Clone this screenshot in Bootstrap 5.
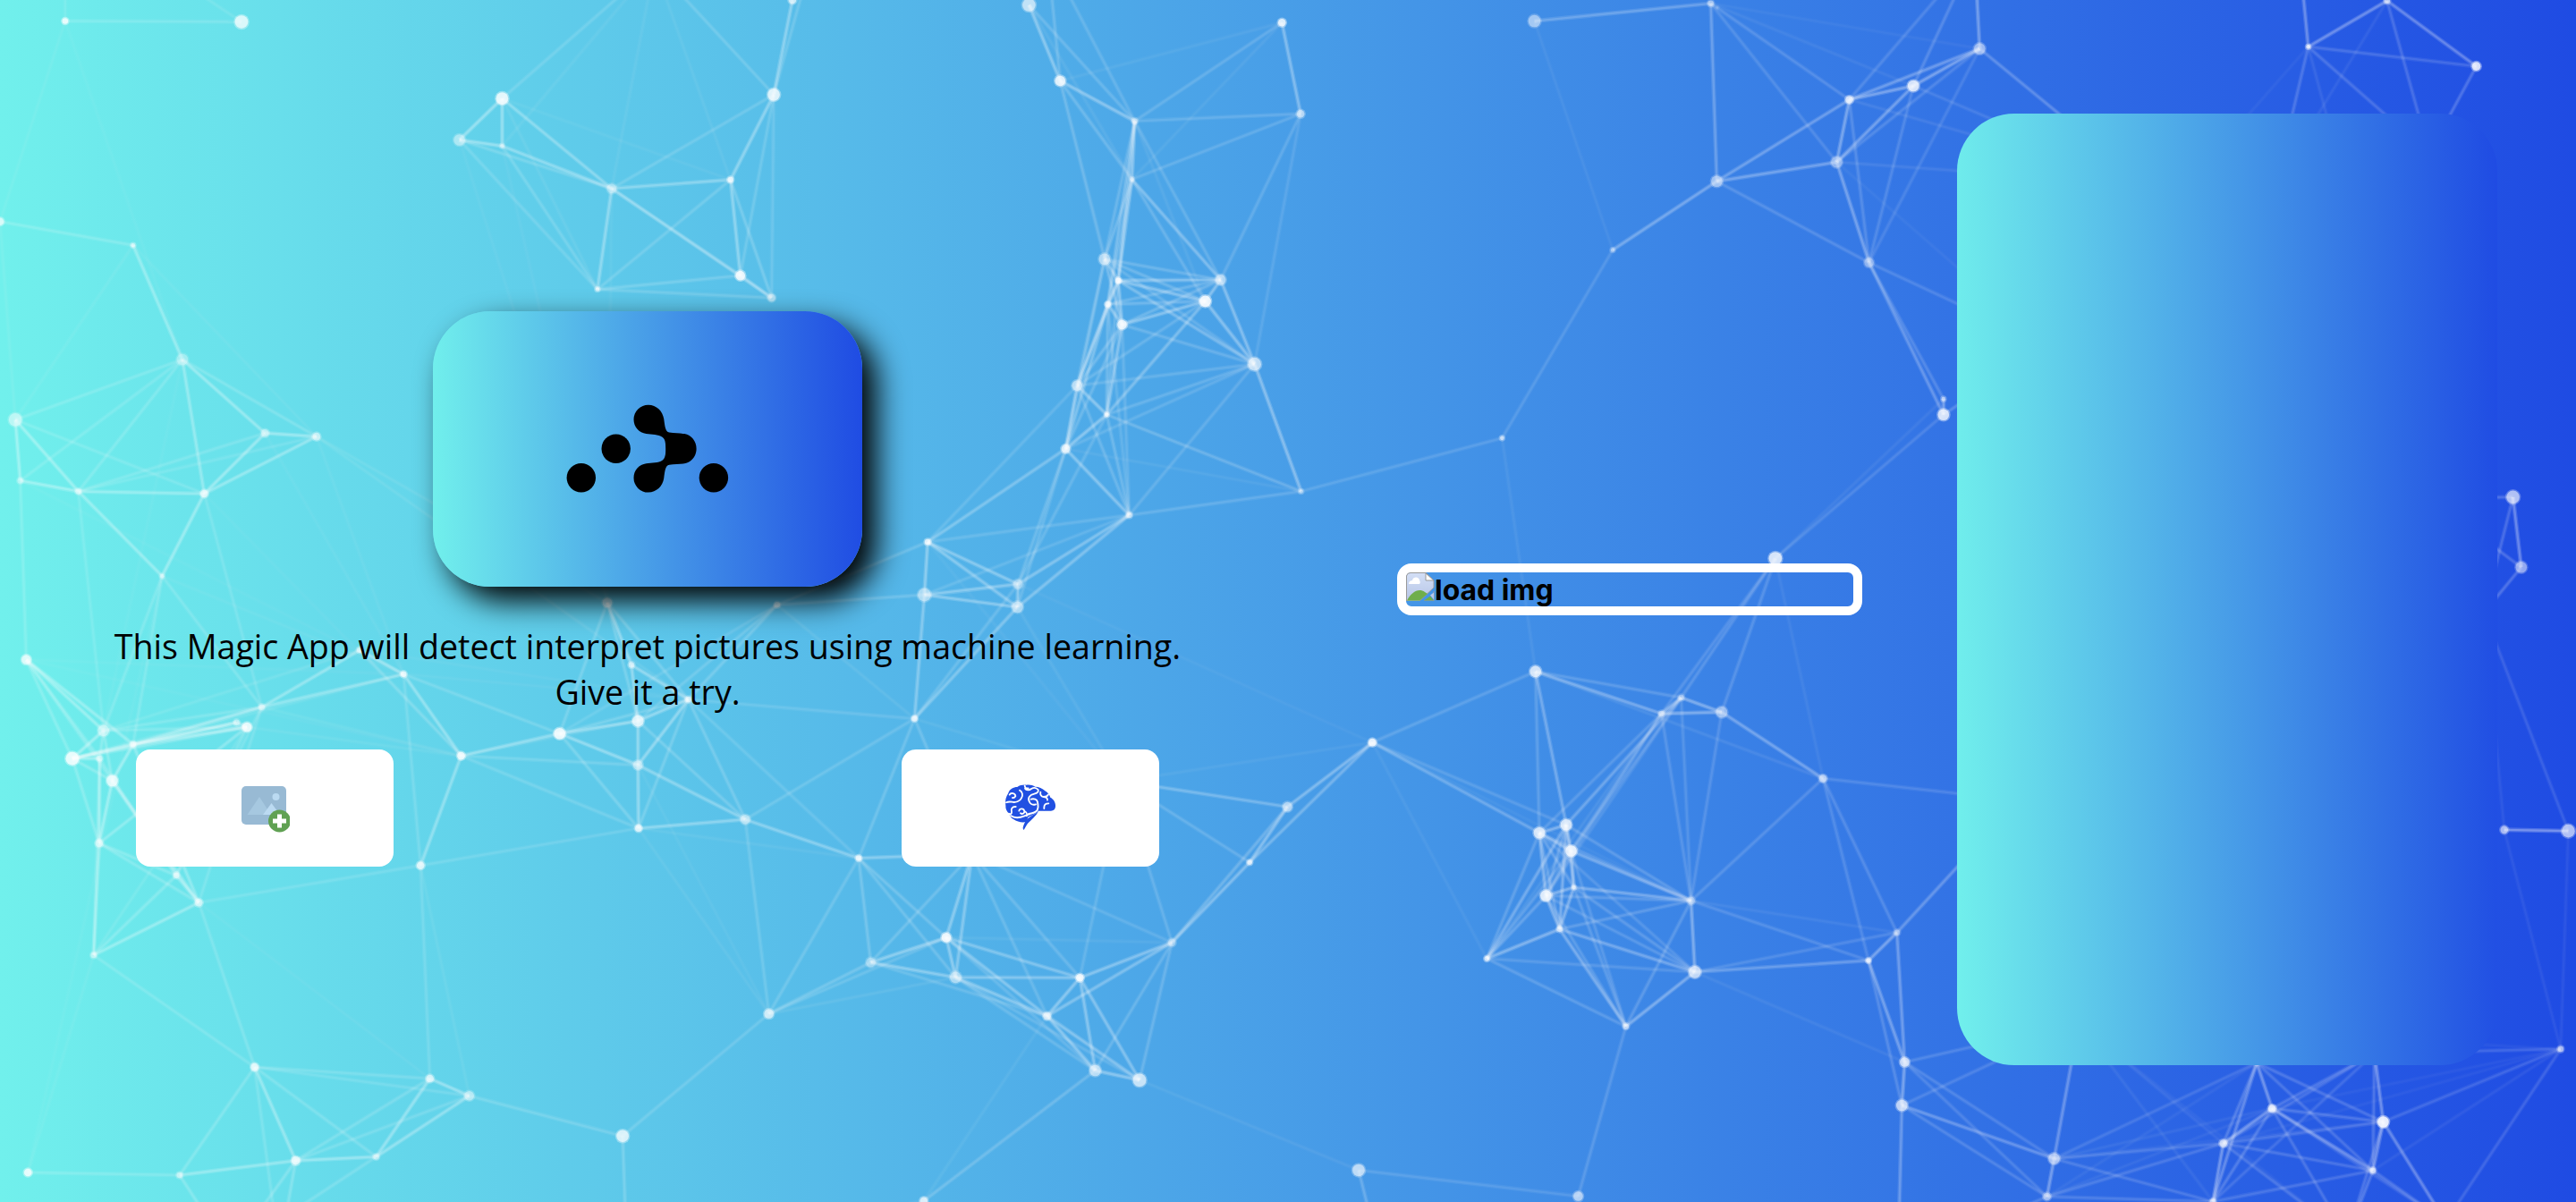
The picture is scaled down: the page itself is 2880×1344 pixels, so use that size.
<!DOCTYPE html>
<html lang="en">
<head>
<meta charset="utf-8">
<meta name="viewport" content="width=device-width, initial-scale=1">
<title>Magic App</title>
<link rel="stylesheet" href="https://cdn.jsdelivr.net/npm/bootstrap@5.3.0/dist/css/bootstrap.min.css">
<style>
  :root { --grad: #71f0ec, #1f4be3; }
  body { background: linear-gradient(90deg, var(--grad)); color: #000; min-height: 1344px; }
  .net-canvas { inset: 0; width: 2880px; height: 1344px; z-index: 0; }
  .stage { height: 1317px; z-index: 1; }
  .intro { width: 1448px; }
  .logo-tile { width: 480px; height: 308px; border-radius: 64px; background: linear-gradient(89deg, var(--grad)); box-shadow: 16px 16px 34px #000; }
  .tagline { font: 400 37.6px/51px "Open Sans", "Noto Sans", sans-serif; margin-top: 41px; margin-bottom: 39px; }
  .action-row { width: 1144px; margin-right: 1px; }
  .action-btn, .action-btn:hover { width: 288px; height: 131px; border-radius: 16px; background: #fff; border: 0; padding: 0; }
  .preview { width: 520px; height: 58px; margin-left: 114px; border: 10px solid #fff; border-radius: 16px; font: 700 31.9px/39px Inter, sans-serif; }
  .result { width: 604px; height: 1064px; margin-left: 106px; border-radius: 64px; background: linear-gradient(89deg, var(--grad)); }
</style>
</head>
<body class="position-relative overflow-hidden">
<svg class="net-canvas position-absolute" id="net" viewBox="0 0 2880 1344" aria-hidden="true"></svg>

<main class="stage d-flex align-items-center position-relative">
  <section class="intro d-flex flex-column align-items-center flex-shrink-0">
    <div class="logo-tile d-flex align-items-center justify-content-center">
      <svg width="184" height="100" viewBox="632 452 184 100">
        <circle cx="649.8" cy="534.3" r="16.2"/><circle cx="688.7" cy="501.7" r="16.2"/><circle cx="797.9" cy="534.3" r="16.2"/>
        <path d="M724.9 452.8c9 0 16 7 17.300 15.500c1.300 9 1.500 14.200 6 15.300c6 1.200 12 .7 17 1.500c8 1.500 13.400 8.500 13.400 16.600s-5.400 15.100-13.400 16.600c-5 .8-11 .3-17 1.500c-4.500 1.100-4.700 6.300-6 15.300c-1.300 8.500-8.300 15.500-17.300 15.500a16.200 16.200 0 0 1-16.400-16.300c0-8.500 6-14.800 14-16c6-.9 14-.7 18-3.600c3.200-2.500 3.700-6 3.700-13s-.5-10.500-3.700-13c-4-2.900-12-2.700-18-3.600c-8-1.200-14-7.500-14-16a16.200 16.200 0 0 1 16.400-16.300z"/>
      </svg>
    </div>
    <p class="tagline text-center">This Magic App will detect interpret pictures using machine learning.<br>Give it a try.</p>
    <div class="action-row d-flex justify-content-between">
      <button class="action-btn btn d-flex align-items-center justify-content-center" aria-label="Add picture">
        <svg width="56" height="54" viewBox="0 0 56 54">
          <rect x="2" y="2" width="50" height="43" rx="5" fill="#98bad4"/>
          <path d="M8.500 34l13.500-20 13 20z" fill="#a6c8e0"/><path d="M26 34l9.500-13 9.500 13z" fill="#bbdaf1"/>
          <circle cx="40.500" cy="14" r="4" fill="#bbdaf1"/>
          <circle cx="44.500" cy="41" r="12.500" fill="#60a153"/>
          <path d="M42 33.500h5v5h5v5h-5v5h-5v-5h-5v-5h5z" fill="#fff"/>
        </svg>
      </button>
      <button class="action-btn btn d-flex align-items-center justify-content-center" aria-label="Detect">
        <svg width="60" height="56" viewBox="66 44 180 168">
          <path fill="#2150e2" d="M73 118c-3-16 1-30 9-42 4-13 17-20 30-20 8-6 20-8 30-7 10-2 22 0 30 6 12 0 25 6 33 14 10 5 16 15 18 22 12 6 19 19 17 32-2 9-6 13-15 13h-42c-4 6-10 8-17 12-12 7-15 5-18 10l-5 14c-12 5-30 1-44-8-9-5-13-13-14-19-8-7-13-16-12-27z"/>
          <path fill="#2150e2" d="M183 138c-9 16-22 27-36 40-4 6-8 13-13 22-3-2-4-7-2-12 4-11 8-20 15-26 10-8 24-15 36-24z"/>
          <g fill="none" stroke="#fff" stroke-width="5.500" stroke-linecap="round">
            <path d="M86 82c4-8 20-6 20 5M106 87c-3 5-6 6-10 5M120 67c9 4 12 17 6 26-5 11-20 16-32 13-8-1-14-1-19 2"/>
            <path d="M137 51c0 7 5 11 12 9M138 61c4 6 14 7 21 1 8-5 17-4 23 3 2 7-3 12-13 14-15 3-23 14-17 25 4 9 13 13 22 10M158 97c9-3 21 0 22 10 3 11 2 20-1 27-8 8-18 11-29 12"/>
            <path d="M190 73c-2 8 2 15 10 16 8 0 13-2 16-8M200 89c8 0 14 4 13 11M202 124c0-9 6-13 15-13M202 124v4"/>
            <path d="M107 122c-12-1-17 7-14 17 1 7-4 10-9 6M118 136c2-9 16-9 18 1 1 8-8 11-13 7M136 137c6 3 10 10 8 16M90 152c14 10 32 7 46 1 8-4 12-4 18-6"/>
          </g>
        </svg>
      </button>
    </div>
  </section>

  <section class="preview d-flex align-items-start flex-shrink-0">
    <svg width="32" height="32" viewBox="0 0 32 32" class="flex-shrink-0">
      <defs><linearGradient id="sky" x2="0" y2="1"><stop stop-color="#d3dff6"/><stop offset="1" stop-color="#b6c5e6"/></linearGradient></defs>
      <path d="M.500 4Q1 .500 5 .500H22L31 9V17L15 32H.500z" fill="url(#sky)" stroke="#999" stroke-width="1"/>
      <path d="M3 13c0-3 2-4 4-4 1-5 8-4 8 0 1 1 1 3 0 4z" fill="#fff"/>
      <path d="M1 31.500C6 22 14 17 21 22L24 24 15 31.500z" fill="#6fae4b"/>
      <path d="M20 31.500l7-5 4 5z" fill="#6fae4b"/>
      <path d="M31 21v11H20" fill="none" stroke="#999"/>
      <path d="M27 25.500l4-3v8z" fill="#b9c7e6"/>
      <path d="M22 1v8h9z" fill="#fff" stroke="#999"/>
    </svg>
    <span>load img</span>
  </section>

  <section class="result flex-shrink-0"></section>
</main>

<script src="https://cdn.jsdelivr.net/npm/bootstrap@5.3.0/dist/js/bootstrap.bundle.min.js"></script>
<script>
// Constellation: six tiles of 960x672, each holding nodes "x,y,radius,opacity" on a 1568-unit grid.
const tiles = {
  a: [0, 0, '119,55,4,.9 441,57,8,.8 0,578,5,.7 243,640,3,.7 333,938,7,.35 28,1095,8,.5 37,1254,4,.4 143,1282,4,.5 373,1288,5,.7 484,1130,5,.5 578,1139,5,.6 296,1503,3,.5 917,257,7.5,.9 839,365,7,.45 917,381,3,.5 1117,492,6,.4 1334,469,4,.8 1413,247,7.5,.85 1447,0,5,.7 1091,755,3,.7 1352,719,6,.95 1409,777,5,.5 1195,-90,3,.3 1500,-200,3,.3 360,-20,3,.3 119,-80,3,.3'],
  b: [960, 0, '311,13,8,.65 368,211,6.5,.9 504,316,4,.5 773,59,5,.9 807,297,5,.6 499,468,3,.5 449,676,7,.55 474,732,4,.9 455,794,4,.8 481,847,6,.9 633,786,7,1 661,730,6.5,.55 723,950,8,.65 399,1006,6.500,.6 453,1082,3,.8 378,1171,5.500,.8 494,1344,4,.6 808,1282,3,.5 126,1414,4,.85 120,1552,8,.5 291,1524,6,.4 1234,55,7.500,.5 1556,9,4,.5 1377,652,3,.5 1175,1143,3,.7 1567,473,7,.5 345,-120,3,.3 1700,-160,3,.3'],
  c: [0, 672, '48,153,6,.8 189,338,7,.5 132,411,8,.9 243,374,4,.6 182,411,4,.5 205,469,7,.8 181,632,5,.6 432,317,4,.5 451,329,6,.9 478,277,4,.5 657,128,4,.6 737,191,4,.8 842,404,5,.9 1022,346,7,.95 1165,313,7,.8 1165,428,6,.5 1166,593,4.500,.8 1361,570,6,.5 1257,257,4,.6 1153,167,4,.6 1109,4,6,.5 1419,10,4,.5 768,690,5,.8 322,716,4,.6 363,787,5,.6 171,924,4,.5 465,1216,5,.8 785,1246,5,.7 857,1291,6,.5 1137,1396,7.500,.8 1404,1077,6,.7 51,1491,5,.9 328,1498,4,.5 540,1460,5.500,.8 687,1450,4,.5 420,1700,3,.3 510,1700,3,.3 1145,1720,3,.3'],
  d: [960, 672, '290,16,7,.5 102,307,4,.8 0,671,4,.8 22,943,6,.4 160,878,6,.95 177,982,7,.5 344,1083,5,.7 404,983,5,.95 572,891,5,.4 432,1225,7,.6 513,1250,8,.7 714,682,3.500,.8 783,537,6,.55 938,369,5,.95 1236,184,7,.8 1466,294,4,.5 1502,252,4,.4 1243,605,7,.8 1292,584,7,.8 1301,652,7,.9 1306,747,3,.6 1255,769,7,.9 1280,856,4,.6 1147,933,3.500,.8 1520,782,5,.4 1527,968,7.500,.7 1401,1110,4,.6 1314,1553,6,.6 913,1485,7.500,.65 119,1565,5,.8 207,660,3,.3 480,470,3,.3 940,1640,3,.3'],
  e: [1920, 0, '0,20,2,.2 241,260,5,.8 358,224,7,.85 479,127,7,.5 218,423,7,.4 277,685,6,.4 413,1041,3,.6 413,1082,7,.85 106,1457,8,.85 1079,122,3,.8 1223,2,4,.6 1386,173,5.500,.9 1453,1297,8,.65 1468,1480,7,.5 780,480,3,.3 470,-120,3,.3 1060,-160,3,.3 1300,400,3,.3 1020,480,3,.3 600,900,3,.3 1300,1300,3,.3'],
  f: [1920, 672, '8,290,7,.45 193,463,5,.6 328,865,4,.4 276,938,3.500,.8 342,1203,6,.75 337,1316,7,.7 615,1455,7,.55 602,1554,5,.5 924,1415,5,.7 1013,1324,5,.85 1216,1359,7,1 1197,1486,4,.7 905,1567,4,.6 1437,597,5,.6 1554,600,8,.65 1540,1169,4,.6 985,1205,3,.3 1200,1180,3,.3 550,520,3,.3 660,1100,3,.3 1400,30,3,.3 330,1720,3,.3 1330,1620,3,.3 1150,1660,3,.3']
};
// Links by strength.
const links = {
  '.34': 'a12-a13 a12-a14 a13-a14 a12-a15 a14-a15 a15-a16 a15-a20 a16-a17 a17-a18 a16-a20 a15-a19 a20-a21 a3-a4 a4-a9 a9-a10 a9-a8 a8-a10 a7-a8 a6-a7 a5-a7 a5-a6 a7-a11 a8-a11 a4-a8 ' +
    'b0-b1 b1-b2 b3-b4 b2-b5 b5-b7 b2-b7 b6-b7 b7-b11 b7-b10 b7-b8 b8-b9 b10-b11 b9-b10 b10-b12 b11-b12 b12-b17 b8-b13 b7-b9 b13-b14 b14-b15 b13-b15 b8-b15 b9-b14 b10-b14 b15-b16 b15-b18 b18-b19 b18-b20 b16-b20 b20-d0 b19-d0 b19-b20 b19-d1 d0-d1 b7-b12 b23-b25 b21-b22 b22-b25 b2-b8 b18-d0 b16-d0 b5-b11 ' +
    'c0-c1 c0-c3 c2-c3 c1-c2 c3-c9 c2-c8 c3-c8 c3-c7 c2-c7 c2-c4 c4-c6 c5-c6 c3-c5 c5-c24 c3-c24 c7-c8 c9-c10 c9-c11 c10-c11 c11-c12 c12-c13 c13-c14 c14-c15 c15-c16 c13-c15 c14-c18 c14-c19 c19-c20 c18-c19 c15-c18 c16-c17 c17-d2 c15-c17 c12-c22 c6-c25 c24-c25 c23-c24 c26-c33 c27-c28 c27-c34 c28-c34 c33-c34 c32-c33 c8-c6 ' +
    'd3-d4 d4-d5 d3-d5 d4-d7 d5-d7 d5-d6 d6-d7 d4-d6 d7-d8 d6-d8 d6-d9 d6-d10 d9-d10 d7-d10 d7-d9 d8-d11 d11-d12 d12-d13 d11-d13 d31-d12 d30-d4 d30-d5 d2-d30 d13-d17 d14-d15 d15-d16 d14-d18 d16-d18 d17-d18 d17-d19 d18-d19 d19-d20 d17-d21 d20-d21 d19-d24 d18-d22 d21-d22 d20-d22 d22-d23 d22-d25 d24-d25 d25-d26 d22-d26 d15-f0 d16-f0 d20-d24 d18-d23 ' +
    'b25-e1 e1-e2 e2-e3 e1-e3 e2-e4 e1-e4 b25-e4 e4-e5 e5-e7 e6-e7 e9-e10 e10-e11 e9-e16 e3-e15 e12-e13 f0-f1 f2-f3 f2-f18 f3-f4 f4-f5 f5-f6 f5-f21 f13-f14 f6-f7 f8-f9 f9-f16 f9-f11 f10-f11 f10-f17 f16-f12 f8-f12 f6-f19 f3-d25 f10-f22 f2-f4 e3-e14',
  '.2': 'a0-a1 a2-a3 a5-a4 a4-a10 a4-a7 a4-a6 a5-a8 a11-c9 a11-c1 a11-c3 a10-c18 a6-c0 a7-c1 a8-c9 a7-a9 a12-a22 a17-a22 a15-a17 a13-a15 a14-a19 a15-a21 a16-a21 a19-a20 a19-a21 a16-a19 a17-a20 a17-a21 a13-a19 a10-c20 a7-a10 ' +
    'b0-b2 b2-b3 b2-b4 b4-b5 b1-b5 b1-b6 b2-b11 b4-b11 b4-b12 b2-b6 b5-b6 b5-b10 b5-b8 b6-b11 b6-b10 b6-b9 b8-b10 b8-b11 b9-b11 b9-b12 b6-b12 b6-b13 b7-b13 b9-b13 b10-b13 b12-b13 b12-b14 b12-b15 b12-b16 b8-b16 b9-b16 b14-b16 b13-b16 b14-b17 b16-b17 b17-b24 b24-b23 b7-b14 b9-b15 b8-b14 b6-b15 b13-b18 b14-b20 b15-b20 b16-b18 b16-b19 b15-d0 b26-b1 b26-b2 b18-c21 b19-c21 a23-a17 ' +
    'c0-c2 c0-c4 c0-c5 c1-c4 c1-c5 c1-c9 c1-c8 c2-c9 c2-c5 c2-c6 c4-c25 c6-c24 c6-c23 c23-c25 c4-c23 c5-c23 c8-c23 c9-c23 c8-c25 c9-c24 c10-c1 c11-c3 c10-c12 c11-c13 c11-c22 c12-c15 c12-c16 c13-c16 c13-c18 c13-c20 c20-c14 c20-c18 c21-c18 c21-c14 c21-c13 c14-c17 c18-c17 c18-d2 c18-c16 c24-c26 c25-c26 c22-c27 c26-c27 c26-c32 c26-c34 c26-c28 c31-c32 c28-c29 c28-c33 c27-c33 c29-c30 c30-d3 c30-d4 c30-d2 c29-c37 c32-c35 c33-c36 c33-c35 c34-c35 c26-c36 c16-c22 c17-c30 c22-c24 ' +
    'c17-d1 d1-d2 d1-d30 d2-d4 d2-d3 d2-d5 d3-d6 d5-d9 d4-d9 d5-d10 d8-d9 d8-d10 d30-d3 d30-d7 d30-d6 d30-d8 d31-d11 d31-d8 d8-d12 d31-d7 d13-d14 d13-d18 d14-d17 d14-d16 d14-f1 d15-d17 d15-d19 d16-d19 d15-d23 d16-d21 d15-d21 d16-d24 d15-d24 d16-e8 d15-e8 d17-d20 d17-d22 d18-d20 d18-d21 d19-d21 d19-d23 d17-d23 d21-d23 d17-d24 d18-d24 d21-d24 d22-d24 d21-d25 d20-d25 d17-d25 d19-d26 d20-d26 d21-d26 d24-d26 d23-d26 d23-d25 d26-d27 d27-d28 d28-d32 d29-c37 d1-b20 d1-c18 d9-d29 ' +
    'b22-e1 b22-e4 e3-e5 e2-e5 e1-e5 e3-e4 e2-e14 e1-e14 e4-e14 e5-e19 e5-e6 e7-e8 e7-e19 e9-e11 e9-e17 e9-e18 e10-e17 e11-e17 e9-e20 e1-e15 e2-e15 e12-e20 e13-e20 e12-f20 e13-f20 b25-e5 d24-f1 d25-f2 d24-f3 f1-f2 f1-f3 f1-f18 f3-f5 f5-f7 f4-f6 f4-f7 f4-f19 f5-f19 f6-f8 f7-f8 f6-f12 f7-f12 f7-f21 f8-f11 f8-f10 f9-f10 f9-f12 f8-f16 f11-f12 f9-f17 f8-f17 f10-f16 f11-f16 f11-f17 f9-f23 f8-f23 f11-f22 f11-f23 f10-f23 f12-f17 f9-f22 f10-f15 f15-f17 f15-f22 f14-f20 f6-f16 f0-e8 f0-d24',
  '.1': 'a0-a2 a0-a4 a1-a24 a0-a25 a2-a5 a3-a5 a3-a10 a12-a16 a12-a19 a13-c20 a14-c20 a15-c20 a22-a14 a22-a15 a22-a16 a11-c31 a11-c11 a10-c11 a9-c11 a8-c12 a4-c1 a6-c11 b1-b3 b3-b5 b1-b9 b0-b5 b2-b10 b12-b17 b17-b15 b24-d14 b21-b23 b20-d13 b18-d31 b17-b14 ' +
    'c0-c11 c0-c12 c9-c12 c10-c18 c11-c18 c8-c12 c14-c12 c24-c27 c25-c31 c22-c28 c16-d2 c16-c30 c30-c15 c21-d1 d1-d31 d0-d31 d12-d8 d13-d23 d13-d31 d13-d24 d10-d28 d9-d29 d6-d29 d5-c30 d4-d8 d24-f2 d25-f4 f1-e8 f13-f15 f14-f15 f14-f13 f13-f20 f15-f19 f15-f11 f15-f9 f10-f6 f9-f6 f9-f7 f8-f15 f16-f7 f19-f8 f19-f12 f19-f23 e9-e19 b22-e2 b22-e3 e8-e6 e4-e19 e10-e18'
};
const ns = 'http://www.w3.org/2000/svg', net = document.getElementById('net'), pts = {};
const add = (tag, attrs) => {
  const el = document.createElementNS(ns, tag);
  for (const k in attrs) el.setAttribute(k, attrs[k]);
  net.appendChild(el);
};
for (const t in tiles) tiles[t][2].split(' ').forEach((s, i) => {
  const [x, y, r, o] = s.split(',').map(Number);
  pts[t + i] = { x: tiles[t][0] + x * 960 / 1568, y: tiles[t][1] + y * 672 / 1568, r, o };
});
// Each link is a faint wide stroke under a narrower core, which gives it a soft edge; longer links fade.
for (const o in links) links[o].split(' ').forEach(l => {
  const [p, q] = l.split('-').map(k => pts[k]);
  const fade = Math.max(0.4, Math.min(1, 1.2 - Math.hypot(p.x - q.x, p.y - q.y) / 420));
  for (const w of [5, 2.4])
    add('line', { x1: p.x, y1: p.y, x2: q.x, y2: q.y, stroke: '#fff', 'stroke-width': w, 'stroke-opacity': o * fade * (w > 3 ? 0.45 : 0.6) });
});
for (const k in pts) {
  const p = pts[k];
  add('circle', { cx: p.x, cy: p.y, r: p.r + 0.8, fill: '#fff', 'fill-opacity': p.o * 0.4 });
  add('circle', { cx: p.x, cy: p.y, r: p.r - 0.7, fill: '#fff', 'fill-opacity': p.o * 0.8 });
}
</script>
</body>
</html>
